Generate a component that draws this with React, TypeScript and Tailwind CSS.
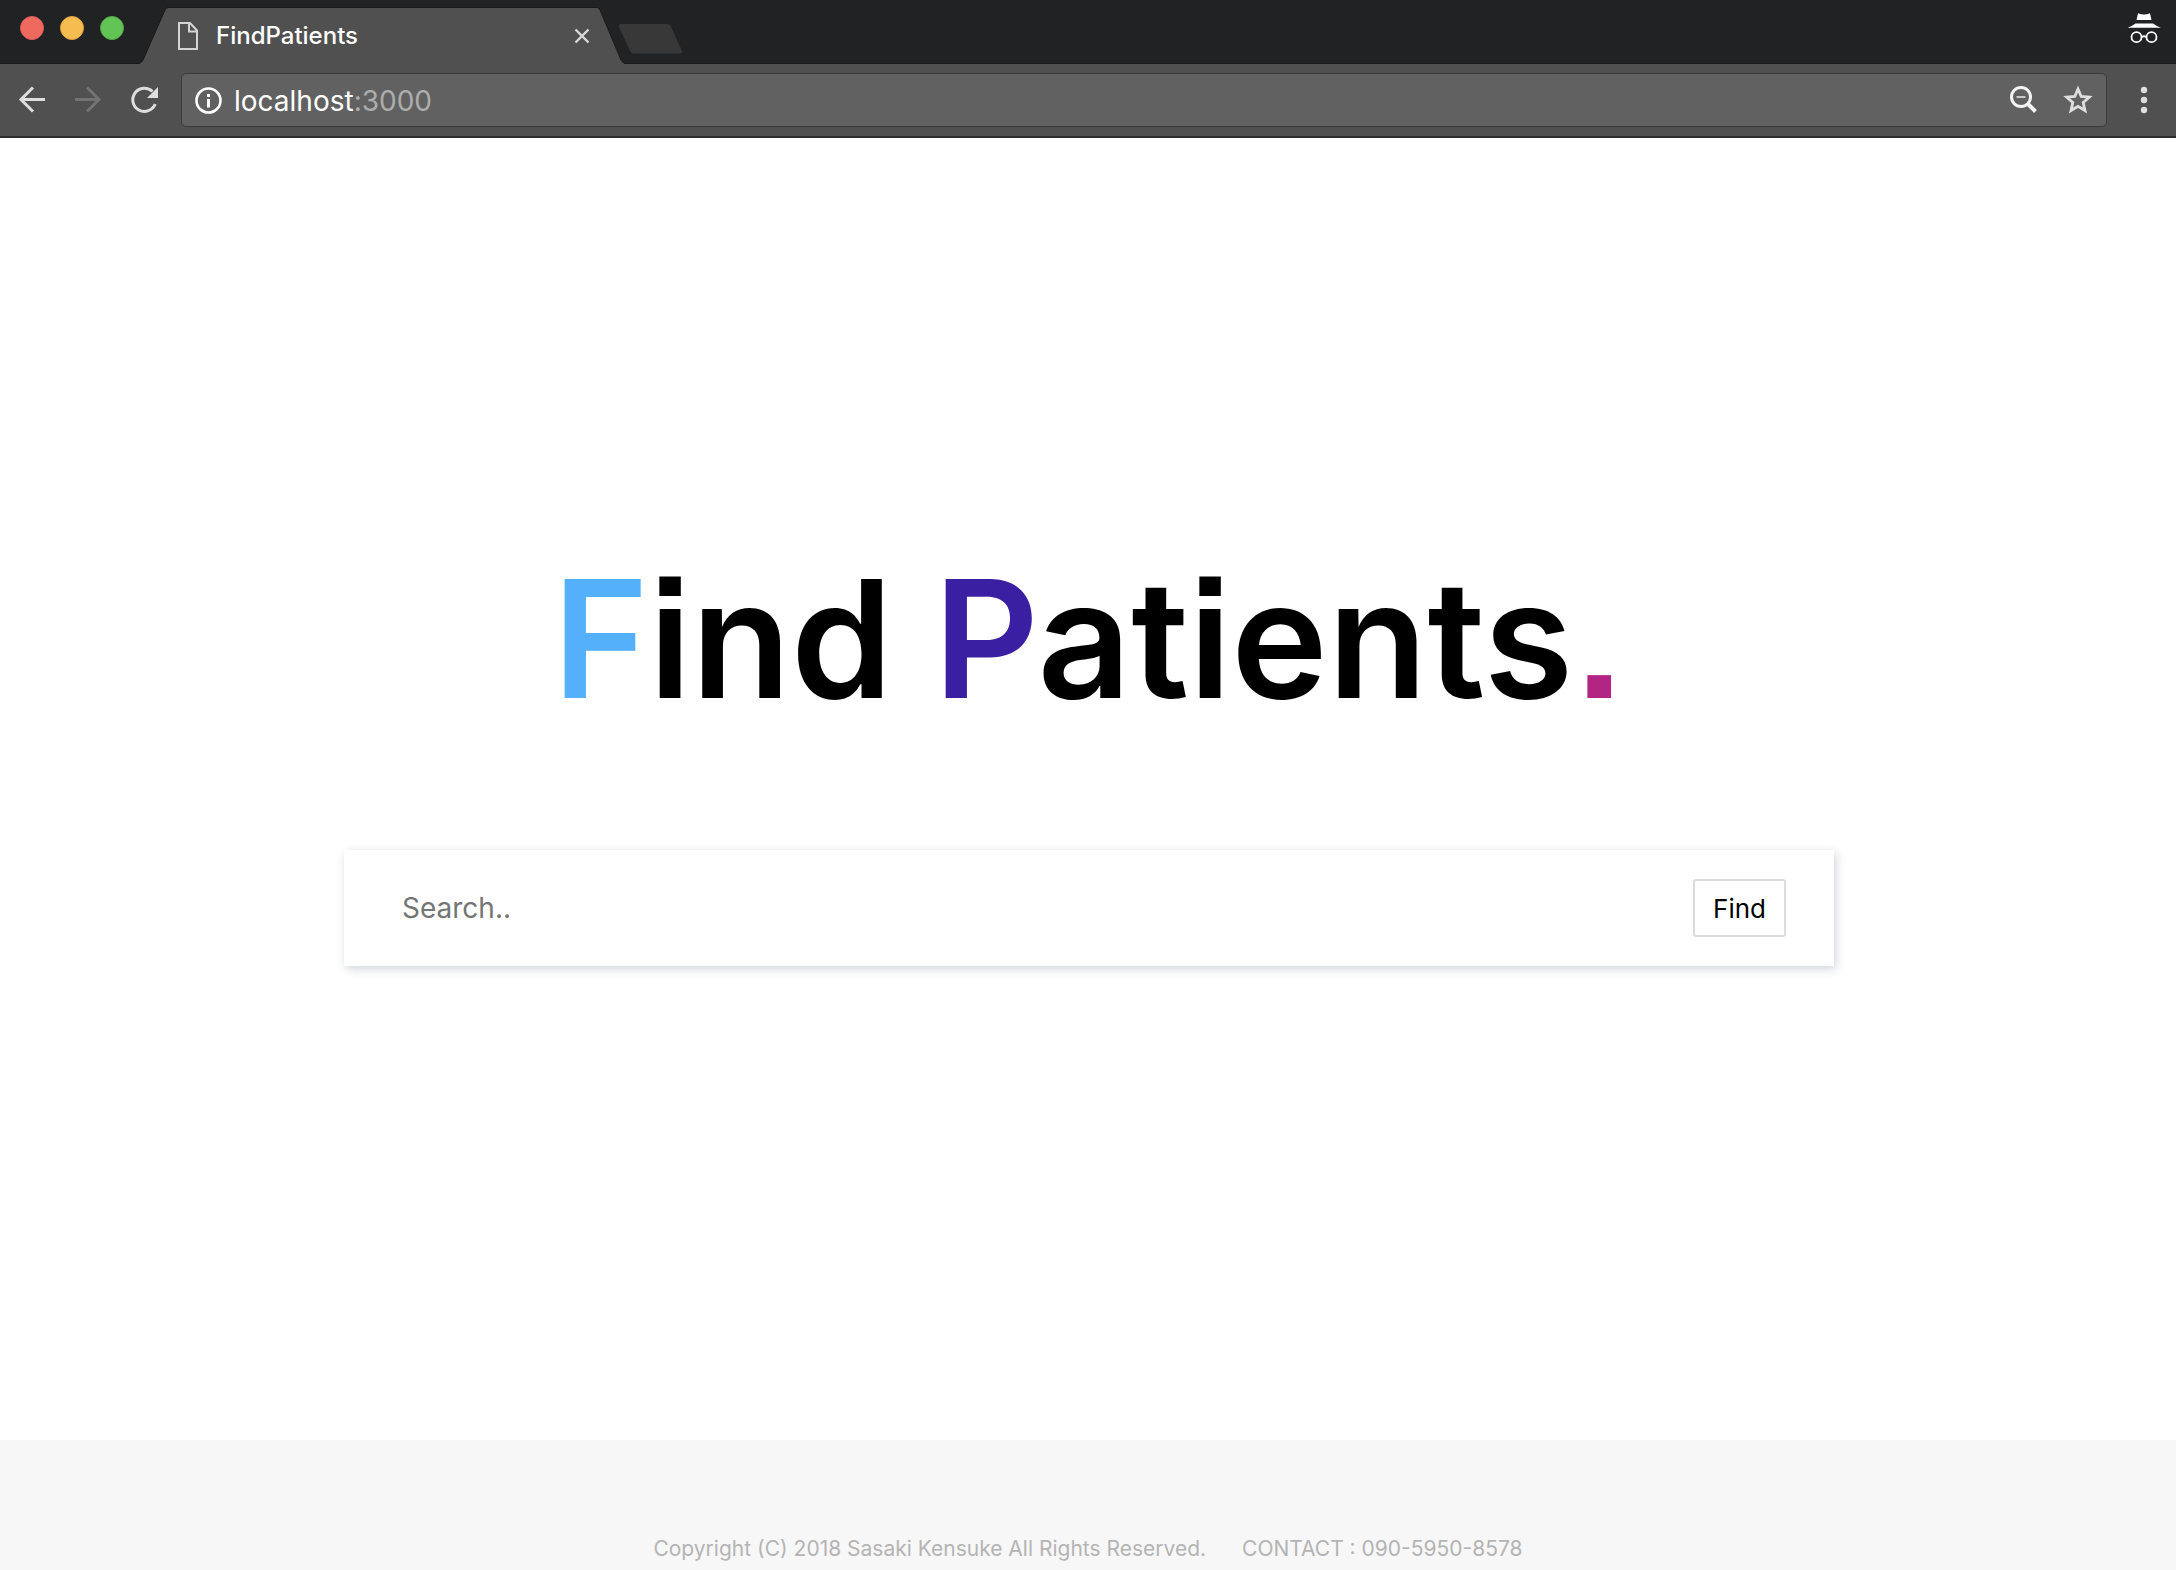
function TabStrip() {
  return (
    <header className="flex h-16 items-start border-b border-[#19191a] bg-[#202224]">
      <div className="flex w-[140px] shrink-0 gap-4 pl-5 pt-4">
        <button aria-label="Close window" className="size-6 rounded-full border border-[#d9605a] bg-[#ee6a5f]" />
        <button aria-label="Minimize window" className="size-6 rounded-full border border-[#dba444] bg-[#f5bd4f]" />
        <button aria-label="Zoom window" className="size-6 rounded-full border border-[#52a945] bg-[#61c454]" />
      </div>
      <div className="relative h-16 w-[484px] shrink-0">
        <svg aria-hidden="true" className="absolute inset-0" width="484" height="64" viewBox="0 0 484 64">
          <path d="M0 64V63q2 -1 3 -3L25 10q1 -2.500 4 -2.500H456q3 0 4 2.500L481 60q1 2 3 3V64z" fill="#505050" stroke="none" />
          <path d="M0 63q2 -1 3 -3L25 10q1 -2.500 3 -2.500H457q2 0 3 2.500L481 60q1 2 3 3" fill="none" stroke="#19191a" />
        </svg>
        <div className="relative flex h-16 items-center pl-9 pr-8 pt-2">
          <svg aria-hidden="true" width="24" height="30" viewBox="0 0 24 30" fill="none" stroke="#d3d3d3" strokeWidth="2">
            <path d="M3 2H14L21 9.500V28H3z" />
            <path d="M13 2V10.500H21" />
          </svg>
          <button className="ml-4 flex-1 text-left text-2xl font-medium text-white">FindPatients</button>
          <button aria-label="Close tab" className="text-[#d9d9d9]">
            <svg width="20" height="20" viewBox="0 0 20 20" fill="none" stroke="currentColor" strokeWidth="2.400">
              <path d="M3.500 3.500l13 13M16.500 3.500l-13 13" />
            </svg>
          </button>
        </div>
      </div>
      <button aria-label="New tab" className="-ml-2 mt-6">
        <svg width="68" height="30" viewBox="0 0 68 30">
          <path d="M5 0H51q3 0 4 2.500L66 27q1 2.500 -1.500 2.500H18q-3 0 -4 -2.500L3 3q-1 -3 2 -3z" fill="#383838" />
        </svg>
      </button>
      <svg role="img" aria-label="Incognito" className="ml-auto mr-[14px] mt-3" width="36" height="32" viewBox="0 0 36 32">
        <path d="M10.500 8L12 1.200q3 1.300 6 1.300t6 -1.300L25.500 8z" fill="#fff" />
        <path d="M1.500 15.800q4 -1.300 8 -4.300h17.500q4 3 8 4.300z" fill="#fff" />
        <g fill="none" stroke="#fff" strokeWidth="1.800">
          <circle cx="10.500" cy="25.200" r="5" />
          <circle cx="25.500" cy="25.200" r="5" />
          <path d="M15.500 25q2.500 -1.500 5 0" />
        </g>
      </svg>
    </header>
  );
}

function Toolbar() {
  return (
    <nav className="flex h-[74px] items-center border-b-2 border-[#2c2c2c] bg-[#505050] pl-4">
      <button aria-label="Back" className="text-[#dedede]">
        <svg width="32" height="32" viewBox="0 0 32 32" fill="none" stroke="currentColor" strokeWidth="3">
          <path d="M29 15.500H5M17 3.500L5 15.500L17 27.500" />
        </svg>
      </button>
      <button aria-label="Forward" disabled className="ml-6 text-[#737373]">
        <svg width="32" height="32" viewBox="0 0 32 32" fill="none" stroke="currentColor" strokeWidth="3">
          <path d="M3 15.500H27M15 3.500L27 15.500L15 27.500" />
        </svg>
      </button>
      <button aria-label="Reload" className="ml-6 text-[#dedede]">
        <svg width="32" height="32" viewBox="0 0 32 32" fill="none" stroke="currentColor" strokeWidth="3">
          <path d="M27.200 20A11.600 11.600 0 1 1 24.500 7.500" />
          <path d="M30 3V14H19z" fill="currentColor" stroke="none" />
        </svg>
      </button>
      <div className="ml-[21px] flex h-[54px] flex-1 items-center rounded-[5px] border border-[#3a3a3a] bg-[#616161] px-3">
        <svg aria-hidden="true" width="28" height="28" viewBox="0 0 28 28" fill="none" stroke="#fff" strokeWidth="2.600">
          <circle cx="14.500" cy="14.500" r="12" />
          <path d="M14.500 13V21.500M14.500 8V11" strokeWidth="3" />
        </svg>
        <div className="ml-3 flex-1 pt-0.5 text-[28px] leading-8 text-white" role="textbox" aria-label="Address" tabIndex={0}>
          localhost<span className="text-[#adadad]">:3000</span>
        </div>
        <button aria-label="Zoom out" className="text-[#f4f4f4]">
          <svg width="30" height="30" viewBox="0 0 30 30" fill="none" stroke="currentColor">
            <circle cx="13" cy="12" r="9.500" strokeWidth="3" />
            <path d="M20 19L27.500 26.500" strokeWidth="4" />
            <path d="M8.500 12H17.500" strokeWidth="2" stroke="#c9c9c9" />
          </svg>
        </button>
        <button aria-label="Bookmark this page" className="ml-6 text-[#dedede]">
          <svg width="32" height="32" viewBox="0 0 32 32" fill="none" stroke="currentColor" strokeWidth="2.800">
            <path d="M16 5L19.200 12.500L27.300 13.200L21.200 18.500L23 26.500L16 22.300L9 26.500L10.800 18.500L4.700 13.200L12.800 12.500z" />
          </svg>
        </button>
      </div>
      <button aria-label="Menu" className="ml-[21px] mr-4 text-[#dedede]">
        <svg width="32" height="32" viewBox="0 0 32 32" fill="currentColor">
          <circle cx="16" cy="6" r="3.200" />
          <circle cx="16" cy="16" r="3.200" />
          <circle cx="16" cy="26" r="3.200" />
        </svg>
      </button>
    </nav>
  );
}

export default function App() {
  return (
    <div className="flex min-h-screen flex-col bg-white font-['Inter','Noto_Sans_CJK_JP',sans-serif]">
      <TabStrip />
      <Toolbar />
      <main className="flex flex-1 flex-col items-center pl-0.5 pt-[401px]">
        <h1 className="text-[163px] font-semibold leading-[200px] text-black [font-feature-settings:'ss07']">
          <span className="text-[#54b0fb]">F</span>ind <span className="text-[#3b1fa3]">P</span>atients
          <span className="text-[#b22582]">.</span>
        </h1>
        <form
          onSubmit={(event) => event.preventDefault()}
          className="mt-[111px] flex h-[116px] w-[1490px] max-w-full items-center bg-white pl-[58px] pr-12 shadow-[2px_3px_9px_rgba(60,80,100,0.24)]"
        >
          <input
            type="text"
            aria-label="Search"
            placeholder="Search.."
            className="min-w-0 flex-1 text-[28px] leading-9 text-black outline-none placeholder:text-[#757575]"
          />
          <button type="submit" className="h-[58px] rounded-[3px] border-2 border-[#dcdcdc] px-[18px] text-[26px] text-black">
            Find
          </button>
        </form>
      </main>
      <footer className="flex h-[130px] items-end justify-center gap-9 bg-[#f7f7f7] pb-[7px] text-[21px] leading-7 text-[#b4b4b4]">
        <small className="text-[21px]">Copyright (C) 2018 Sasaki Kensuke All Rights Reserved.</small>
        <span>CONTACT : 090-5950-8578</span>
      </footer>
    </div>
  );
}
